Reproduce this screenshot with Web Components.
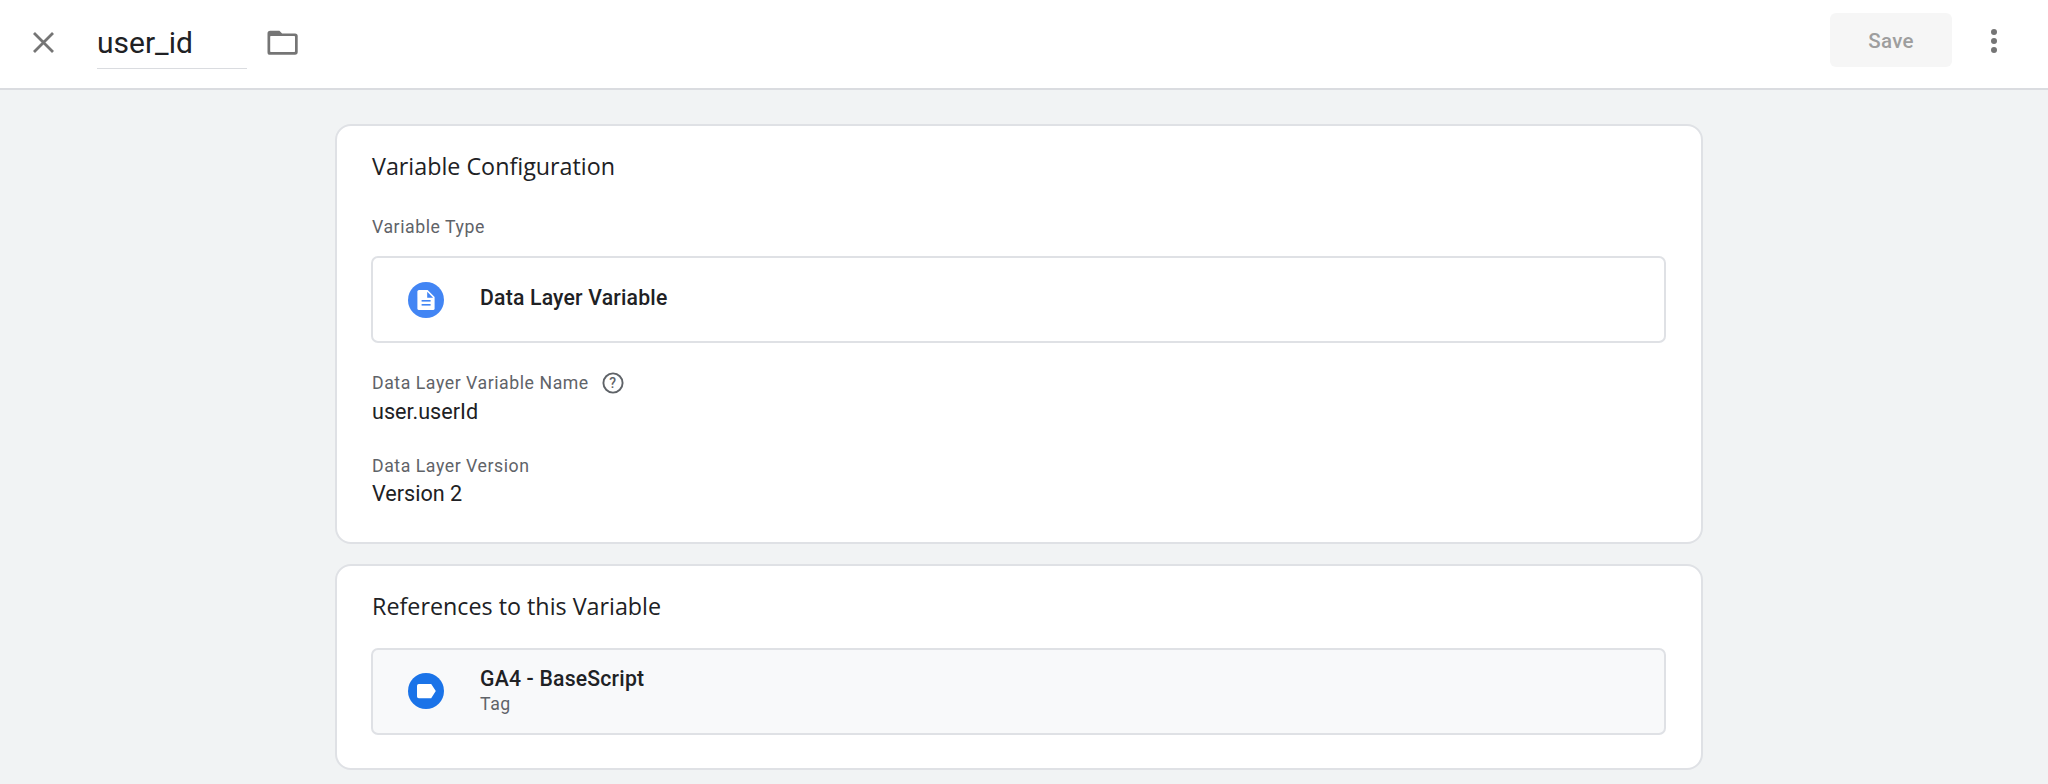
<!DOCTYPE html>
<html><head><meta charset="utf-8">
<style>
html,body{margin:0;padding:0;height:100%;overflow:hidden}
body{background:#f1f3f4;font-family:Roboto,sans-serif;color:#202124;height:784px}
</style></head><body>
<editor-page>
<top-bar name="user_id"></top-bar>
<main-area>
<config-card heading="Variable Configuration">
  <field-label style="margin-top:33px">Variable Type</field-label>
  <item-row primary="Data Layer Variable" kind="doc" style="margin-top:17px"></item-row>
  <field-label help style="margin-top:27.5px">Data Layer Variable Name</field-label>
  <field-value>user.userId</field-value>
  <field-label style="margin-top:27px">Data Layer Version</field-label>
  <field-value style="margin-top:1px">Version 2</field-value>
</config-card>
<config-card heading="References to this Variable" style="margin-top:20px">
  <item-row primary="GA4 - BaseScript" secondary="Tag" kind="tag" style="margin-top:26px"></item-row>
</config-card>
</main-area>
</editor-page>
<script>
function def(name,html){customElements.define(name,class extends HTMLElement{
  connectedCallback(){if(this.shadowRoot)return;const r=this.attachShadow({mode:'open'});r.innerHTML=typeof html==='function'?html(this):html;}
});}
def('editor-page',`<style>:host{display:flex;flex-direction:column;height:784px}</style><slot></slot>`);
def('top-bar',h=>`<style>
:host{display:flex;align-items:center;height:88px;background:#fff;border-bottom:2px solid #dadce0;flex:none}
.x{margin-left:32px;margin-top:-4px;width:23px;height:23px;flex:none;display:block}
.name{margin-left:42px;width:150px;height:50px;box-sizing:border-box;border-bottom:1.4px solid #dadce0;font:30px/48px Roboto,sans-serif;color:#202124}
.folder{margin-left:18.4px;margin-top:-5px;width:34px;height:32px;flex:none;display:block}
.sp{flex:1}
.save{width:122px;height:54px;border-radius:6px;background:#f6f6f6;color:#9e9e9e;font:500 20.5px/56px Roboto,sans-serif;letter-spacing:.3px;text-align:center;margin-top:-8px}
.more{margin-left:26px;margin-right:38px;margin-top:-6px;width:32px;height:32px;display:block;flex:none}
</style>
<svg class="x" viewBox="0 0 23 23"><path d="M2 2L21 21M21 2L2 21" stroke="#757575" stroke-width="2.8" fill="none"/></svg>
<div class="name">${h.getAttribute('name')}</div>
<svg class="folder" viewBox="0 0 34 32"><path d="M5.2 4.7h9.2l2.7 2.7h12.9a2.7 2.7 0 0 1 2.7 2.7v16a2.7 2.7 0 0 1-2.7 2.7H5.2A2.7 2.7 0 0 1 2.5 25.9V7.4a2.7 2.7 0 0 1 2.7-2.7z" fill="#757575"/><rect x="5.2" y="10.1" width="24.8" height="15.8" rx="0.6" fill="#fff"/></svg>
<div class="sp"></div>
<div class="save">Save</div>
<svg class="more" viewBox="0 0 32 32"><circle cx="16" cy="7" r="3" fill="#757575"/><circle cx="16" cy="16" r="3" fill="#757575"/><circle cx="16" cy="25" r="3" fill="#757575"/></svg>`);
def('main-area',`<style>:host{display:block;box-sizing:border-box;padding:34px 0 0 335px;width:1703px}</style><slot></slot>`);
def('config-card',h=>`<style>
:host{display:block;width:1368px;box-sizing:border-box;background:#fff;border:2px solid #dfe1e5;border-radius:16px;padding:24px 35px 33px}
h2{margin:0;font:400 23.3px/32px "Open Sans",Roboto,sans-serif;color:#202124}
</style><h2>${h.getAttribute('heading')}</h2><slot></slot>`);
def('field-label',h=>`<style>
:host{display:flex;align-items:center;font:400 17.7px/24px Roboto,sans-serif;letter-spacing:.55px;color:#5f6368}
svg{width:24px;height:24px;margin-left:12px;display:block}
</style><slot></slot>${h.hasAttribute('help')?`<svg viewBox="0 0 24 24"><circle cx="12" cy="12" r="9.6" fill="none" stroke="#5f6368" stroke-width="1.9"/><text x="12" y="17" text-anchor="middle" font-family="Roboto" font-size="14" font-weight="500" fill="#5f6368">?</text></svg>`:''}`);
def('field-value',`<style>:host{display:block;font:400 21.6px/30px Roboto,sans-serif;color:#202124;margin-top:2px}</style><slot></slot>`);
def('item-row',h=>{
 const k=h.getAttribute('kind'),s=h.getAttribute('secondary');
 const icon=k==='doc'
 ?`<svg viewBox="0 0 36 36"><circle cx="18" cy="18" r="18" fill="#4285f4"/><path d="M11 8h8.6l7 7v11.4a1.6 1.6 0 0 1-1.6 1.6H11a1.6 1.6 0 0 1-1.6-1.6V9.6A1.6 1.6 0 0 1 11 8z" fill="#fff"/><path d="M19.2 9.7v6h5.9z" fill="#4285f4"/><rect x="13.6" y="18" width="9" height="1.6" fill="#4285f4"/><rect x="13.6" y="22" width="9" height="1.6" fill="#4285f4"/></svg>`
 :`<svg viewBox="0 0 36 36"><circle cx="18" cy="18" r="18" fill="#1a73e8"/><path d="M10.8 11h12.4l4.6 7-4.6 7.2H10.8A1.8 1.8 0 0 1 9 23.4V12.8A1.8 1.8 0 0 1 10.8 11z" fill="#fff"/></svg>`;
 return `<style>
:host{display:flex;align-items:center;height:87px;margin-left:-1px;box-sizing:border-box;border:2px solid #dfe1e5;border-radius:7px;background:${k==='tag'?'#f8f9fa':'#fff'}}
svg{width:36px;height:36px;margin-left:35px;flex:none;display:block}
.t{margin-left:36px;padding-bottom:${s?0:3}px}
.p{font:500 21.2px/26px Roboto,sans-serif;letter-spacing:.2px;color:#202124}
.s{font:400 17.7px/24px Roboto,sans-serif;letter-spacing:.55px;color:#5f6368}
</style>${icon}<div class="t"><div class="p">${h.getAttribute('primary')}</div>${s?`<div class="s">${s}</div>`:''}</div>`;});
</script>
</body></html>
